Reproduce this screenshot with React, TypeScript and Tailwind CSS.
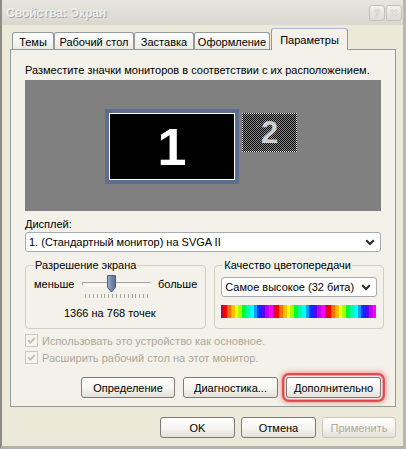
import React from "react";

const FONT = "font-['Liberation_Sans',Arial,sans-serif]";

function Chevron({ color = "#2f2f2f" }: { color?: string }) {
  return (
    <svg width="10" height="7" viewBox="0 0 10 7">
      <path d="M1.2 1.2 L5 5 L8.8 1.2" fill="none" stroke={color} strokeWidth="2.2" />
    </svg>
  );
}

function Combo({ text, className = "" }: { text: string; className?: string }) {
  return (
    <div
      className={`flex h-[20px] items-center justify-between rounded-[3px] border border-[#a5acb2] bg-white pl-[3px] pr-[5px] ${className}`}
    >
      <span className="whitespace-nowrap">{text}</span>
      <Chevron />
    </div>
  );
}

function Button({
  label,
  w,
  disabled = false,
  glow = false,
}: {
  label: string;
  w: string;
  disabled?: boolean;
  glow?: boolean;
}) {
  return (
    <div
      className={`flex h-[21px] items-center justify-center rounded-[3px] border bg-linear-to-b from-white via-[#f6f5f1] to-[#e3e1d8] ${w} ${
        disabled ? "border-[#c9c7ba] text-[#aca899]" : "border-[#7b7a76] text-black"
      } ${
        glow
          ? "shadow-[0_0_0_1px_#f8e6e6,0_0_0_2px_#f0a0a0,0_0_1px_4px_#e0464a,0_0_4px_6px_rgba(222,60,60,0.3)]"
          : ""
      }`}
    >
      {label}
    </div>
  );
}

function Tab({ label, w, active = false }: { label: string; w: string; active?: boolean }) {
  if (active) {
    return (
      <div
        className={`relative z-10 -mb-px ml-[1px] flex h-[22px] items-start justify-center rounded-t-[3px] border border-b-0 border-[#919b9c] border-t-[#aebad0] bg-[#f3f1ea] pt-[4px] ${w}`}
      >
        {label}
      </div>
    );
  }
  return (
    <div
      className={`flex h-[17px] items-center justify-center rounded-t-[3px] border border-b-0 border-[#919b9c] bg-linear-to-b from-white to-[#eceae3] pt-[1px] ${w}`}
    >
      {label}
    </div>
  );
}

function DisabledCheck({ label }: { label: string }) {
  return (
    <div className="flex h-[13px] items-center gap-[4px] text-[#aca899]">
      <div className="flex h-[13px] w-[13px] items-center justify-center border border-[#cac8bb] bg-[#f5f4ee]">
        <svg width="9" height="9" viewBox="0 0 9 9">
          <path d="M1 4.2 L3.4 6.6 L8 1.8" fill="none" stroke="#c2c0b2" strokeWidth="1.8" />
        </svg>
      </div>
      <span className="whitespace-nowrap">{label}</span>
    </div>
  );
}

function TrackThumb() {
  return (
    <svg width="11" height="18" viewBox="0 0 11 18">
      <defs>
        <linearGradient id="thumbFill" x1="0" x2="1" y1="0" y2="0">
          <stop offset="0" stopColor="#a9b7d3" />
          <stop offset="0.45" stopColor="#7387b2" />
          <stop offset="1" stopColor="#5a6e98" />
        </linearGradient>
      </defs>
      <path
        d="M1.5 0.5 H9.5 V12.5 L5.5 17 L1.5 12.5 Z"
        fill="url(#thumbFill)"
        stroke="#4c5d82"
        strokeWidth="1"
      />
    </svg>
  );
}

export default function App() {
  const ticks = Array.from({ length: 17 });
  return (
    <div className={`${FONT} h-[449px] w-[406px] overflow-hidden bg-white text-[11px] leading-[14px] text-black`}>
      <div className="flex h-full w-full flex-col border-b-[3px] border-l-2 border-r-[3px] border-b-[#b3b1aa] border-l-[#8d8c86] border-r-[#b9b7b0] bg-[#ece9d8]">
        {/* caption */}
        <div className="flex h-[25px] items-center justify-between bg-linear-to-b from-[#e7e5df] to-[#d9d7cf] pl-[4px] pr-[1px]">
          <span className="text-[12px] font-bold text-[#eeeeec] [text-shadow:1px_1px_0_#a9a8a2]">
            Свойства: Экран
          </span>
          <div className="flex gap-[1px]">
            <div className="flex h-[16px] w-[16px] items-center justify-center rounded-[3px] border border-[#c3c1ba] bg-linear-to-b from-[#f2f1ed] to-[#dddbd4] text-[11px] font-bold text-[#e8e7e3] [text-shadow:0_0_1px_#a09f99]">
              ?
            </div>
            <div className="flex h-[16px] w-[16px] items-center justify-center rounded-[3px] border border-[#c3c1ba] bg-linear-to-b from-[#f2f1ed] to-[#dddbd4] text-[13px] font-bold text-[#e8e7e3] [text-shadow:0_0_1px_#a09f99]">
              ×
            </div>
          </div>
        </div>

        <div className="flex flex-1 flex-col pl-[8px] pr-[7px] pt-[3px]">
          {/* tab strip */}
          <div className="flex items-end pl-[2px]">
            <Tab label="Темы" w="w-[42px]" />
            <Tab label="Рабочий стол" w="w-[80px]" />
            <Tab label="Заставка" w="w-[60px]" />
            <Tab label="Оформление" w="w-[76px]" />
            <Tab label="Параметры" w="w-[77px]" active />
          </div>

          {/* tab page */}
          <div className="flex h-[358px] flex-col border border-[#919b9c] bg-[#f3f1ea] px-[14px] pt-[13px]">
            <div className="whitespace-nowrap">
              Разместите значки мониторов в соответствии с их расположением.
            </div>

            {/* monitor arrangement canvas */}
            <div className="relative mt-[3px] h-[131px] bg-[#808080]">
              <div className="absolute left-[80px] top-[29px] flex h-[75px] w-[134px] items-center justify-center border-4 border-[#5c6d8e] bg-black outline outline-1 -outline-offset-5 outline-white">
                <span className="text-[52px] font-bold leading-none text-white">1</span>
              </div>
              <div className="absolute left-[217px] top-[33px] flex h-[39px] w-[55px] items-center justify-center border border-dotted border-white bg-[image:conic-gradient(#000_25%,#8c8c8c_0_50%,#000_0_75%,#8c8c8c_0)] bg-size-[2px_2px]">
                <span className="text-[31px] font-bold leading-none text-[#cfcfcf]">2</span>
              </div>
            </div>

            <div className="mt-[6px]">Дисплей:</div>
            <Combo className="mt-[1px]" text="1. (Стандартный монитор) на SVGA II" />

            {/* group boxes */}
            <div className="mt-[6px] flex gap-[8px]">
              <fieldset className="h-[71px] w-[177px] rounded-[4px] border border-[#d0d0bf] px-[8px]">
                <legend className="px-[1px] leading-[14px]">Разрешение экрана</legend>
                <div className="mt-[3px] flex items-center">
                  <span className="w-[48px]">меньше</span>
                  <div className="relative flex h-[18px] w-[69px] items-center">
                    <div className="h-[4px] w-full border border-[#a3a29c] border-b-white border-r-white bg-[#f4f3ee]" />
                    <div className="absolute left-[24px] top-0">
                      <TrackThumb />
                    </div>
                  </div>
                  <span className="ml-[7px]">больше</span>
                </div>
                <div className="ml-[51px] mt-[1px] flex h-[4px] w-[63px] justify-between">
                  {ticks.map((_, i) => (
                    <div key={i} className="h-[4px] w-px bg-[#a3a29c]" />
                  ))}
                </div>
                <div className="mt-[8px] pl-[30px]">1366 на 768 точек</div>
              </fieldset>

              <fieldset className="h-[71px] w-[171px] rounded-[4px] border border-[#d0d0bf] px-[6px]">
                <legend className="ml-[2px] px-[1px] leading-[14px]">Качество цветопередачи</legend>
                <Combo className="mt-[5px] w-[156px]" text="Самое высокое (32 бита)" />
                <div className="mt-[8px] h-[13px] w-[155px] bg-[image:repeating-linear-gradient(90deg,#c00040_0_2px,#ff0000_2px_6px,#ff7000_6px_10px,#ffc000_10px_14px,#ffff00_14px_17px,#a0ff00_17px_21px,#00ff30_21px_25px,#00ffa0_25px_29px,#00ffff_29px_33px,#00a0ff_33px_36px,#0030ff_36px_40px,#6000ff_40px_44px,#c000ff_44px_48px,#ff00ff_48px_52px)]" />
              </fieldset>
            </div>

            <div className="mt-[5px] flex flex-col gap-[4px]">
              <DisabledCheck label="Использовать это устройство как основное." />
              <DisabledCheck label="Расширить рабочий стол на этот монитор." />
            </div>

            <div className="mt-[13px] flex justify-end gap-[8px]">
              <Button label="Определение" w="w-[94px]" />
              <Button label="Диагностика..." w="w-[95px]" />
              <Button label="Дополнительно" w="w-[95px]" glow />
            </div>
          </div>

          {/* dialog buttons */}
          <div className="mt-[10px] flex justify-end gap-[6px]">
            <Button label="OK" w="w-[75px]" />
            <Button label="Отмена" w="w-[75px]" />
            <Button label="Применить" w="w-[74px]" disabled />
          </div>
        </div>
      </div>
    </div>
  );
}
